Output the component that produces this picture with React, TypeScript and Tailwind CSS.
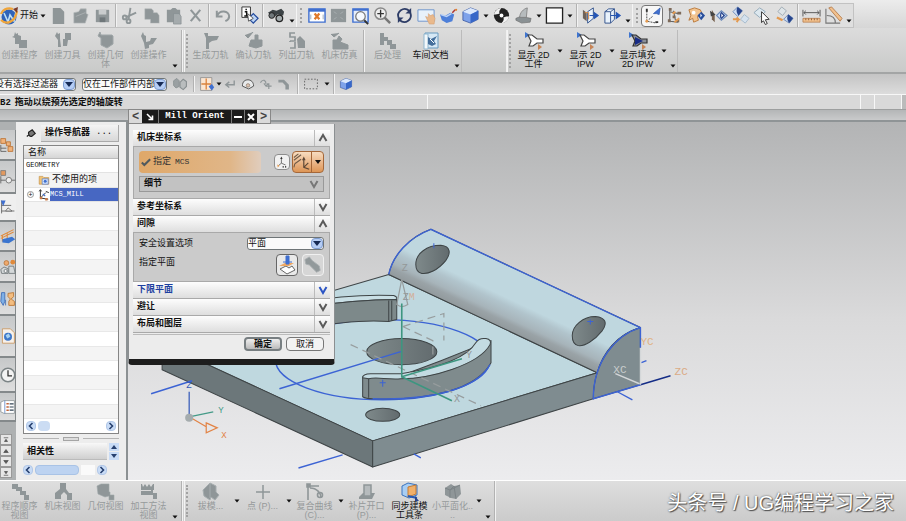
import type { ReactNode } from "react";

const G = "#8f9698";
const B = "#3f6fd0";
const O = "#e39a50";

// all glyphs share a 20x20 box
const glyphs: Record<string, ReactNode> = {
  logo: (
    <>
      <circle cx="9" cy="11" r="7.5" fill="#2f63b8" />
      <path d="M4 7l4 9 2-7 4 6 2-9" fill="none" stroke="#bfe0f5" strokeWidth="1.6" />
      <path d="M1 14c5 5 14 3 16-9M1 8c1-4 6-7 12-5" fill="none" stroke="#f0a53a" strokeWidth="2.2" />
      <path d="M13 3l5-2-1 6z" fill="#7b3b2a" />
    </>
  ),
  doc: <path d="M4 2h8l4 4v13H4z" fill={G} />,
  open: <path d="M3 7l5-1 2-3h6v5l2 1-3 9H3z M5 11l10-4" fill={G} stroke="#b5babb" strokeWidth=".7" />,
  save: (
    <>
      <path d="M3 4h14v13H3z" fill={G} />
      <path d="M6 4h8v5H6z" fill="#c9cccd" />
      <path d="M7 12h6v5H7z" fill="#6f777a" />
    </>
  ),
  cut: (
    <g fill="none" stroke={G} strokeWidth="2">
      <path d="M11 2l-2 12M17 7L6 12" />
      <circle cx="5" cy="12" r="2" />
      <circle cx="9" cy="16" r="2" />
    </g>
  ),
  copy: <path d="M3 3h7l2 2v2h4l2 3v8H9v-4H3z" fill={G} stroke="#aeb3b5" strokeWidth=".5" />,
  paste: (
    <>
      <path d="M3 4h4l2-2h3l2 2h3v13H3z" fill={G} />
      <path d="M10 8h6l2 3v8h-8z" fill="#a5abad" stroke="#858c8f" strokeWidth=".7" />
    </>
  ),
  cross: <path d="M5 4l10 12M15 4L5 16" stroke={G} strokeWidth="2.2" />,
  undo: <path d="M4 5v6h6M4 11c3-8 13-6 13 0 0 3-2 4-4 5" fill="none" stroke={G} strokeWidth="2.1" />,
  info: (
    <>
      <path d="M2 1h9v11H2z" fill="#fff" stroke="#333" />
      <path d="M6.500 3v1.500M5 6h2v4M4.500 10.500h4.500" fill="none" stroke="#111" strokeWidth="1.500" />
      <path d="M9 13l5-5 5 5-5 5z" fill="#bcd4f5" stroke="#234a9c" strokeWidth="1.300" />
      <path d="M8 8l6 5-5 3z" fill="#fff" stroke="#333" strokeWidth=".8" />
    </>
  ),
  find: (
    <>
      <path d="M1 7l5-3 4 1 5-2 3 3-1 4-6-1-4 3z" fill="#3c4346" />
      <circle cx="5" cy="10" r="3" fill="#71797c" stroke="#222" />
      <circle cx="13" cy="13" r="3.500" fill="#a4acae" stroke="#222" strokeWidth="1.300" />
    </>
  ),
  fit: (
    <>
      <path d="M2 3h17v14H2z" fill="#fff" stroke={B} strokeWidth="1.500" />
      <path d="M2 3h17v3H2z" fill={B} />
      <path d="M8 8l5 6M13 8l-5 6" stroke="#e07a2a" strokeWidth="2.400" />
      <path d="M4 9v5M17 9v5" stroke="#9ab" />
    </>
  ),
  fitGrey: (
    <>
      <path d="M2 3h16v14H2z" fill={G} />
      <path d="M5 6l3 2M15 6l-3 2M5 14l3-2M15 14l-3-2" stroke="#a7adaf" />
    </>
  ),
  zoomBox: (
    <>
      <path d="M2 3h16v14H2z" fill="#e6eefb" stroke={B} strokeWidth="1.500" />
      <path d="M2 3h16v2H2z" fill={B} />
      <circle cx="10" cy="11" r="5" fill="#f5f9ff" stroke="#777" strokeWidth="1.300" />
      <path d="M14 15l4 4" stroke="#333" strokeWidth="2" />
    </>
  ),
  zoom: (
    <>
      <circle cx="8" cy="8" r="6" fill="#eee" stroke="#888" strokeWidth="1.600" />
      <path d="M8 4v8M4.500 8h7" stroke="#333" strokeWidth="1.400" />
      <path d="M12 12l6 6" stroke="#777" strokeWidth="2.600" />
    </>
  ),
  rotate: (
    <g fill="none" stroke="#2d3c66" strokeWidth="1.900">
      <path d="M4 13c-3-7 5-13 11-8M16 7c3 7-5 13-11 8" />
      <path d="M17 2v6h-6zM3 18v-6h6z" fill="#2d3c66" stroke="none" />
    </g>
  ),
  pan: (
    <>
      <path d="M1 4h17v12H1z" fill="#e8f1fa" stroke="#6d94cb" />
      <path d="M9 11l3 1V8l2 2 3-1 2 4-1 6h-5z" fill="#e9b98c" stroke="#d39a68" strokeWidth=".5" />
    </>
  ),
  persp: (
    <>
      <path d="M1 9l6 1 5-3 4 2-2 7-6 2-5-3z" fill="#4d7fd9" />
      <path d="M2 9l6 2 5-3" stroke="#bcd2f5" fill="none" strokeWidth="1.500" />
      <path d="M14 7l3-3" stroke="#a33" strokeWidth="1.500" />
      <circle cx="18" cy="4" r="1.200" fill="#e08030" />
    </>
  ),
  cube: (
    <>
      <path d="M2 6l8-4 8 3v9l-8 4-8-3z" fill="#7ea2ea" stroke="#2f4f9c" strokeWidth=".8" />
      <path d="M2 6l8-4 8 3-8 4z" fill="#dbe8fc" />
      <path d="M10 9l8-4v9l-8 4z" fill="#3767c8" />
    </>
  ),
  shade: (
    <>
      <circle cx="10" cy="10" r="8" fill="#222" />
      <path d="M10 2c-2 2-3 4-2 6-2 1-4 1-6 1 1-4 4-7 8-7zM10 18c2-2 3-4 2-6 2-1 4-1 6-1-1 4-4 7-8 7z" fill="#f1f1f1" />
      <circle cx="10" cy="10" r="2" fill="#fff" />
    </>
  ),
  face: (
    <>
      <path d="M2 13l5-2 11 2-1 4-9 1-6-3z" fill="#8a9194" stroke="#666" strokeWidth=".6" />
      <path d="M6 12c0-5 4-9 8-10l-1 10z" fill="#b6bbbd" stroke="#777" strokeWidth=".8" />
    </>
  ),
  white: <path d="M1.500 2h17v16h-17z" fill="#fff" stroke="#222" strokeWidth="1.400" />,
  clip: (
    <>
      <path d="M2 4l4 3v9l-4-3z" fill="#6e625a" />
      <path d="M7 6l6-4v11l-6 5z" fill="#e9f2fb" stroke="#33528c" />
      <path d="M4 7h4v7" stroke="#d98b45" fill="none" />
      <path d="M9 10h7M14 7l4 3-4 3z" stroke="#2456b5" fill="#2456b5" strokeWidth="1.300" />
    </>
  ),
  clip2: (
    <>
      <path d="M2 6l4-3h6v11l-4 4H2z" fill="#e9f2fb" stroke="#33528c" />
      <path d="M2 6h6v12M8 6l4-3" stroke="#33528c" fill="none" />
      <path d="M8 10h7M14 7l4 3-4 3z" stroke="#2456b5" fill="#2456b5" strokeWidth="1.300" />
    </>
  ),
  wcs: (
    <>
      <path d="M4 5v11l10 2M4 16l6-5" stroke="#444" fill="none" strokeDasharray="2 1" />
      <path d="M11 8l7-6-1 7-3-1z" fill={B} stroke="#2c57ae" strokeWidth=".8" />
      <path d="M3 3h2v3H3zM13 16h3v2h-3z" fill="#333" />
      <circle cx="4" cy="16" r="1.500" fill={O} />
    </>
  ),
  nodes: (
    <>
      <path d="M5 3v13l9 1M5 6l9 2M9 5l2 10" stroke="#666" fill="none" strokeWidth="1.200" />
      <path d="M4 2h3v3H4zM13 6h4v3h-4zM3 14h3v3H3zM12 14h3v3h-3zM8 10h3v3H8z" fill="#7d6a5a" />
      <path d="M8 8l3-2M10 17l5-4" stroke={O} strokeWidth="2" />
    </>
  ),
  key: (
    <>
      <path d="M2 4l6-2 6 2 2 4-5 3 1 4-5 2-1-4-4 2 2-5z" fill="#f2c490" stroke="#b6712f" strokeWidth=".9" />
      <circle cx="7" cy="7" r="2" fill="#fff" />
      <path d="M11 10l4-4 4 4-4 5z" fill="#284e9c" />
      <path d="M14 8l2 2-2 2z" fill="#d6e4fa" />
    </>
  ),
  prev: (
    <>
      <path d="M3 4l3 5v8l-3-3z" fill="#76604d" />
      <path d="M1 5l6 4-5 2z" fill="#444" />
      <path d="M8 10l5-5 6 5-6 5z" fill="#c9dcf7" stroke="#6f8bb8" strokeWidth="1.200" />
      <path d="M13 6l4 4-4 4c-2-2-2-6 0-8z" fill="#27458d" />
      <path d="M13 8l2 2-2 2z" fill="#fff" />
    </>
  ),
  swap: (
    <>
      <path d="M2 6l5-5 5 4-5 6z" fill="#cfdff5" stroke="#6f8bb8" />
      <path d="M7 1l5 4-4 5c-2-2-3-6-1-9z" fill="#27458d" />
      <path d="M10 14l4-5 5 4-4 5z" fill="#d5e2ee" stroke="#a7bccd" />
      <path d="M2 14h6l-2-2M8 14l-2 3" stroke={O} strokeWidth="2" fill="none" />
    </>
  ),
  pick: (
    <>
      <path d="M1 7l6-5 6 4-6 6z" fill="#dce7ee" stroke="#92a9b8" />
      <path d="M9 6l8 8-4 .5 2 4-2 1-2-4-2 2z" fill="#fff" stroke="#333" />
    </>
  ),
  swap2: (
    <>
      <path d="M3 6l4-5 5 4-4 5z" fill="#dfe5e8" stroke="#a1adb5" />
      <path d="M9 14l5-5 5 4-4 5z" fill="#cfdff5" stroke="#6f8bb8" />
      <path d="M14 9l5 4-4 5c-2-2-3-6-1-9z" fill="#27458d" />
      <path d="M2 12l6 3" stroke={O} strokeWidth="2.400" />
    </>
  ),
  ruler: (
    <>
      <path d="M1 4v7M19 4v7M2 7h16M4 5L2 7l2 2M16 5l2 2-2 2" stroke="#555" fill="none" />
      <path d="M1 13h18v4H1z" fill="#f1c08d" stroke="#b2794a" strokeWidth=".8" />
      <path d="M4 13v2M7 13v2M10 13v2M13 13v2M16 13v2" stroke="#94623a" />
    </>
  ),
  angle: (
    <>
      <path d="M2 3v15h15M3 10c6 0 9 3 9 8" stroke="#777" fill="none" strokeWidth="1.200" />
      <path d="M5 2l3-1 11 12-2 3z" fill="#f1c08d" stroke="#b2794a" strokeWidth=".9" />
    </>
  ),
  create1: <path d="M5 1l1 2 2-1v2l3 1v4h6v8h-8v-4H5V7L2 6l2-1z" fill={G} />,
  create2: <path d="M4 1l1 2 2-1v6l1 8H5V9L2 5zM12 2h6v7h-3l-1 6h-4V8h2z" fill={G} />,
  create3: <path d="M4 1l1 3h11l1 1v8l-6 4-6-3V7L2 5z" fill={G} stroke="#9fa6a8" />,
  create4: <path d="M4 1l1 3 2 1v6l4-1 1-3h6l-4 6-4 1v3l-4 1-1-6-3-7z" fill={G} />,
  path1: <path d="M3 2h4v3h11l-2 4-5 1-3 2v6H5V7z" fill={G} />,
  verify: <path d="M1 4l3 3 5-6M7 9h4V4h3v5h4v6l-6 2-7-2z" fill={G} stroke={G} />,
  list: (
    <>
      <path d="M8 2H3v4h5v4H3M3 10v1M8 11v6H3" fill="none" stroke={G} strokeWidth="1.700" />
      <path d="M10 8l3-3 5 5v7h-7z" fill={G} />
    </>
  ),
  sim: <path d="M1 3l3 3 5-4M3 9h4l2-4 3 3-2 3 8 3v4H3z" fill={G} stroke={G} />,
  post: <path d="M2 2h4v4h4v4H6v4H2V9zM9 9h5v4h4v5h-6v-4H9z" fill={G} />,
  shop: (
    <>
      <path d="M4 2h13v15H4z" fill="#d6e8f5" stroke="#6699bf" />
      <path d="M3 3h4v15H3z" fill="#f3f8fb" stroke="#90b6cf" />
      <path d="M7 6l3 2 6-3-3 5 2 3-4 2-4-2z" fill="#456f9c" />
      <path d="M9 8l4 4" stroke="#fff" />
    </>
  ),
  show2d: (
    <>
      <path d="M1 1l5 3-5 3z" fill="#3f75cf" />
      <path d="M4 4h4l5 4h6v4h-6l-4 3H5l2-5z" fill="#fff" stroke="#444" strokeWidth="1.200" />
      <path d="M14 13l4 3-4 3z" fill="#c78455" />
    </>
  ),
  show2dFill: (
    <>
      <path d="M1 1l5 3-5 3z" fill="#3f75cf" />
      <path d="M4 4h4l5 4h6v4h-6l-4 3H5l2-5z" fill="#8b8f98" stroke="#333" strokeWidth="1.200" />
      <path d="M7 6l8 4-8 4z" fill="#182c86" />
      <path d="M14 13l4 3-4 3z" fill="#c78455" />
    </>
  ),
  filter: (
    <>
      <path d="M2 6l4-3 3 3v7l-4 2-3-3z" fill="#9aa0a2" stroke="#888f91" />
      <path d="M10 8l4-4 4 3v6l-4 4-4-3z" fill="#b9bdbe" stroke="#888f91" strokeWidth="1.400" />
    </>
  ),
  snap: (
    <>
      <path d="M2 2h14v16H2z" fill="#fbe6d2" stroke="#8c8c8c" />
      <path d="M9 3v14M3 10h12" stroke="#d9823c" strokeWidth="1.600" />
      <path d="M12 13l4-3 3 4-3 4z" fill={B} />
    </>
  ),
  enter: <path d="M16 5v6H5M9 7l-5 4 5 4" fill="none" stroke={G} strokeWidth="2" />,
  dome: (
    <>
      <path d="M2 13C2 6 6 4 10 4s8 3 8 9l-7 4z" fill="#e8eaeb" stroke="#555" strokeWidth="1.400" />
      <circle cx="10" cy="12" r="2.500" fill="#ddc4b4" stroke="#876" />
    </>
  ),
  jump: <path d="M2 8c4-6 8-3 8 2M7 9l3 4 3-4M14 9v8M10 13h8" fill="none" stroke={G} strokeWidth="1.700" />,
  pipe: <path d="M2 4h8l7 7v7h-5v-6L8 8H2z" fill={G} />,
  marquee: <path d="M2 4h16v12H2z" fill="none" stroke="#666" strokeWidth="1.200" strokeDasharray="2 2" />,
  viewProg: <path d="M2 2h6v3h4v4h4v4h3v5h-5v-5h-4V9H6V7H2z" fill={G} />,
  viewMach: <path d="M7 1h6v6l3 4h3v7h-5v-5l-3-3-3 3v4H2v-6l5-4z" fill={G} />,
  viewGeo: <path d="M1 4l4-2h8v8h1v3h4v5h-5v-4l-4 1-7-3z" fill={G} stroke="#a0a7a9" strokeWidth=".6" />,
  viewMethod: <path d="M2 2h1l1 3 2-3 2 3 2-3 2 3 2-3h1v6h-1v3h4v6h-4v-4H2V9h10V8H2z" fill={G} />,
  draft: <path d="M9 1l6 3v6l3 3-4 5-4-3-1 3-6-4-1-6z M9 1v15" fill={G} stroke="#a6adaf" />,
  plus: <path d="M10 3v14M3 10h14" stroke={G} strokeWidth="1.500" />,
  curve: (
    <g fill="none" stroke={G} strokeWidth="1.600">
      <path d="M3 18V3M3 4h11M5 6c7 0 11 5 11 10" />
      <circle cx="15" cy="13" r="2.500" />
      <path d="M2 2h3v3H2z" fill={G} />
    </g>
  ),
  patch: (
    <>
      <path d="M2 15l4-4h12l-3 6H2z" fill={G} />
      <path d="M7 3h7v11H7z" fill="#b6bbbd" stroke={G} strokeWidth="1.500" />
    </>
  ),
  sync: (
    <>
      <path d="M2 4l6-3 9 2v10l-8 3-7-3z" fill="#a8cdf2" stroke="#3b74bf" />
      <path d="M8 5l8-2v9l-8 3z" fill="#f0b06a" stroke="#c57a33" />
      <path d="M8 14l9 2" stroke="#2759b5" strokeWidth="2" />
      <path d="M15 14l4 5h-4z" fill="#27458d" />
    </>
  ),
  facet: (
    <>
      <path d="M2 6l6-4 3 2 6-1 1 9-5 5-5-1-6-3z" fill={G} />
      <path d="M2 6l5 2 4-4M7 8v8M11 4l2 13M7 8l10-5" stroke="#7c8386" fill="none" />
    </>
  ),
  csys: (
    <>
      <path d="M9 3v9l7 3M9 12l-5 4" stroke="#555" strokeWidth="1.300" fill="none" />
      <path d="M7 5l2-4 2 4z" fill="#333" />
      <path d="M2 14l4 2-3 3z" fill={O} />
      <path d="M11 18h2M15 18h2" stroke="#111" strokeWidth="2" />
    </>
  ),
  csys2: (
    <>
      <path d="M1 8l8-6M2 12l7-5M1 5l5-4M2 12l-1 4" stroke="#6f5b48" strokeWidth="1.200" />
      <path d="M12 6v10l6 2M12 16l5-5" stroke="#5b4636" strokeWidth="1.300" fill="none" />
      <path d="M10 8l2-4 2 4z" fill="#5b4636" />
    </>
  ),
  plane: (
    <>
      <path d="M3 14l6-3 3 2 3-2 3 4-8 4z" fill="#fff" stroke="#666" />
      <path d="M2 11l6-3h9l-5 3z" fill="#f0a862" />
      <path d="M9 1h3v8H9zM6 7h9" fill={B} stroke={B} />
    </>
  ),
  torch: <path d="M1 4l5-3 3 4 8 6 1 5-4 2-8-8-4-1z" fill="#92999b" stroke="#a9afb1" />,
  pin: <path d="M3 14l4-3M6 7l6-4 5 6-6 5c-3 1-6-3-5-7z" fill="#777" stroke="#222" strokeWidth="2" />,
  folder: (
    <>
      <path d="M2 4h6l2 2h8v11H2z" fill="#f1c375" stroke="#c08a3c" />
      <path d="M7 8h10v9H7z" fill="#d6e4f8" stroke={B} />
      <circle cx="12" cy="12" r="2.500" fill={B} />
    </>
  ),
  mcs: (
    <>
      <path d="M4 2v13l13 2M4 15l9-9M2 4l2-3 2 3M13 4l5 2" stroke="#222" fill="none" strokeWidth="1.500" />
      <path d="M3 13h4v4H3zM12 15h4v4h-4z" fill="#c97b48" />
      <path d="M8 8l4 4" stroke={B} strokeWidth="2" />
    </>
  ),
  railTree: (
    <>
      <path d="M1 10v8h7M1 14h7" stroke="#555" fill="none" />
      <path d="M1 2h6v6H1zM8 6h5v5H8zM10 12h6v6h-6z" fill="#f0b27a" stroke="#b86f30" />
    </>
  ),
  railPart: (
    <>
      <path d="M1 2h6v6H1z" fill="#e39a60" stroke="#777" />
      <path d="M1 9v9M1 14h6M14 14h5" stroke="#555" />
      <circle cx="11" cy="14" r="3.500" fill="#eee" stroke="#666" />
    </>
  ),
  railOp: (
    <>
      <path d="M2 2v16M2 8h12M2 15h16" stroke="#555" />
      <path d="M1 2h6l-3 7z" fill={B} />
      <path d="M7 15l3-4 5 4z" fill="#eee" stroke="#666" />
    </>
  ),
  railLib: (
    <>
      <path d="M1 10L17 2M1 13L17 5M3 9v8M9 6v8" stroke="#e08a3b" strokeWidth="1.300" />
      <path d="M3 14l12-3 4 3-8 5-8-1z" fill="#3b75cf" />
    </>
  ),
  railRobot: (
    <>
      <circle cx="8" cy="5" r="3" fill="#efa96c" stroke="#b4743c" />
      <circle cx="16" cy="4" r="3" fill="#e08a3b" />
      <path d="M1 13l4-3 5 2v6H2zM11 9h6l2 9h-8z" fill="#d5d9da" stroke="#6a7173" />
      <circle cx="7" cy="15" r="2" fill="#f4f4f4" stroke="#6a7173" />
    </>
  ),
  railTools: (
    <>
      <path d="M2 2h4v11l-2 5-3-5zM7 11v7" fill="#7fb0e6" stroke="#3a68b4" />
      <path d="M10 3l7-1v5l-3 3 4 3v5h-7v-5l2-3-3-3z" fill="#f3bd80" stroke="#b56e2a" />
    </>
  ),
  railWeb: (
    <>
      <path d="M3 1h10l5 5v13H3z" fill="#f7f1ea" stroke="#c59055" />
      <circle cx="10" cy="11" r="5" fill="#3e78c9" />
      <path d="M7 9l4-2 2 4-4 2z" fill="#a8d2f0" />
    </>
  ),
  clock: (
    <>
      <circle cx="10" cy="10" r="8.500" fill="#f3f3f3" stroke="#7c8486" strokeWidth="2" />
      <path d="M10 4v7h5" stroke="#333" fill="none" strokeWidth="1.600" />
    </>
  ),
  railList: (
    <>
      <path d="M1 4l4-2h13v16H5l-4-2z" fill="#fff" stroke="#8a9294" />
      <path d="M6 2v16" stroke="#5c83c4" />
      <path d="M8 6h3M8 10h3M8 14h3" stroke="#c0643a" strokeWidth="2" />
      <path d="M12 6h5M12 10h5M12 14h5" stroke="#345" strokeWidth="1.500" />
    </>
  ),
};

function Glyph({ name, className = "size-5" }: { name: string; className?: string }) {
  return (
    <svg viewBox="0 0 20 20" className={`shrink-0 ${className}`} aria-hidden="true">
      {glyphs[name]}
    </svg>
  );
}

function Caret({ className = "items-center" }: { className?: string }) {
  return (
    <span className={`flex w-[9px] shrink-0 justify-center ${className}`}>
      <svg viewBox="0 0 6 4" className="h-1 w-1.5" aria-hidden="true">
        <path d="M0.500 0.500h5l-2.500 3z" fill="#111" />
      </svg>
    </span>
  );
}

const Sep = () => (
  <span className="flex w-[5px] shrink-0 justify-center self-stretch">
    <span className="w-0.5 border-l border-[#b2b2b2] bg-[#f2f2f2]" />
  </span>
);

const Grip = ({ className = "w-[5px]" }: { className?: string }) => (
  <span className={`flex shrink-0 justify-center self-stretch border-l border-[#f4f4f4] py-1 ${className}`}>
    <span className="border-l-2 border-dotted border-[#a2a2a2]" />
  </span>
);

function ToolIcon({ name, active }: { name: string; active?: boolean }) {
  return (
    <button
      aria-label={name}
      className={`flex h-[22px] w-[22px] shrink-0 items-center justify-center ${active ? "rounded-sm border border-[#777] bg-[#f7f7f7]" : ""}`}
    >
      <Glyph name={name} className="size-[19px]" />
    </button>
  );
}

// "|" separator, ":" grip, "v" low caret, ">" centred caret, anything else is a glyph name
function Strip({ items, active }: { items: string[]; active?: string }) {
  return items.map((item, i) => {
    if (item === "|") return <Sep key={i} />;
    if (item === ":") return <Grip key={i} className="w-[9px]" />;
    if (item === "v") return <Caret key={i} className="items-end self-stretch pb-1" />;
    if (item === ">") return <Caret key={i} />;
    return <ToolIcon key={i} name={item} active={item === active} />;
  });
}

type BigProps = { icon: string; lines: string[]; on?: boolean };

function Big({ icon, lines, on }: BigProps) {
  return (
    <button
      className={`flex w-[43px] shrink-0 flex-col items-center pt-px text-[9px] leading-[9px] whitespace-nowrap ${on ? "text-[#111]" : "text-[#969a9b]"}`}
    >
      <Glyph name={icon} />
      {lines.map((line) => (
        <span key={line}>{line}</span>
      ))}
    </button>
  );
}

function Chevron({ up, color = "#555" }: { up?: boolean; color?: string }) {
  return (
    <svg viewBox="0 0 10 10" className="size-2.5" aria-hidden="true">
      <path d={up ? "M1.500 8L5 2l3.500 6" : "M1.500 2L5 8l3.500-6"} fill="none" stroke={color} strokeWidth="2" />
    </svg>
  );
}

function Combo({ label, value, className = "" }: { label: string; value: string; className?: string }) {
  return (
    <span className={`relative flex h-[13px] shrink-0 ${className}`}>
      <select
        aria-label={label}
        className="w-full appearance-none rounded-[3px] border border-[#6f7577] bg-[#fafafa] text-[9px] leading-[11px] text-[#111]"
      >
        <option>{value}</option>
      </select>
      <span className="pointer-events-none absolute inset-y-px right-px flex w-3 items-center justify-center rounded-sm border border-[#7f9dd0] bg-[#b5cdf5]">
        <svg viewBox="0 0 8 5" className="h-[5px] w-2" aria-hidden="true">
          <path d="M0 0h8L4 5z" fill="#162a55" />
        </svg>
      </span>
    </span>
  );
}

function ScrollButton({ left, label }: { left?: boolean; label: string }) {
  return (
    <button
      aria-label={label}
      className="flex size-2.5 shrink-0 items-center justify-center rounded-sm border border-[#b2c8e8] bg-[#c9dcf6]"
    >
      <svg viewBox="0 0 8 8" className="size-2" aria-hidden="true">
        <path d={left ? "M5.500 1L2.500 4l3 3" : "M2.500 1l3 3-3 3"} fill="none" stroke="#27406f" strokeWidth="1.600" />
      </svg>
    </button>
  );
}

function Toolbars() {
  return (
    <header className="shrink-0">
      <div className="flex h-[28px] items-center bg-linear-to-b from-[#ececec] to-[#d6d6d6] pt-[3px]">
        <div className="flex items-center self-stretch border-y border-r border-[#c2c2c2] bg-[#dfdfdf]">
          <button className="flex items-center text-[9px] text-[#111]">
            <Glyph name="logo" />
            开始
            <Caret />
          </button>
          <Strip
            active="wcs"
            items={[
              "doc", "open", "save", "|", "cut", "copy", "paste", "cross", "|", "undo", "|", "info", "|", "find", "v",
              ":", "fit", "fitGrey", "zoomBox", "zoom", "rotate", "pan", "persp", "cube", ">", "shade", "face", ">",
              "white", ">", "|", "clip", "clip2", "v", ":", "wcs", "nodes", "key", "prev", "swap", "pick", "swap2",
              "|", "ruler", "angle", "v",
            ]}
          />
        </div>
      </div>
      <div className="flex h-[46px] border-b-2 border-[#a3a5a5] bg-linear-to-b from-[#dcdcdc] to-[#c9cac9] pt-0.5">
        <div className="-ml-0.5 flex">
          <Big icon="create1" lines={["创建程序"]} />
          <Big icon="create2" lines={["创建刀具"]} />
          <Big icon="create3" lines={["创建几何", "体"]} />
          <Big icon="create4" lines={["创建操作"]} />
        </div>
        <Caret className="items-end pb-1" />
        <Sep />
        <Grip />
        <Big icon="path1" lines={["生成刀轨"]} />
        <Big icon="verify" lines={["确认刀轨"]} />
        <Big icon="list" lines={["列出刀轨"]} />
        <Big icon="sim" lines={["机床仿真"]} />
        <Sep />
        <Big icon="post" lines={["后处理"]} />
        <Big icon="shop" lines={["车间文档"]} on />
        <Caret className="items-end pb-1" />
        <span className="w-[46px] border-x border-l-[#bbb] border-r-[#f0f0f0]" />
        <Grip />
        <Big icon="show2d" lines={["显示 2D", "工件"]} on />
        <Caret />
        <Big icon="show2d" lines={["显示 2D", "IPW"]} on />
        <Caret />
        <Big icon="show2dFill" lines={["显示填充", "2D IPW"]} on />
        <Caret />
        <Caret className="items-end pb-1" />
        <span className="border-l border-[#bbb]" />
      </div>
      <div className="flex h-5 items-center bg-linear-to-b from-[#c4c4c4] to-[#dcdcdc]">
        <Combo label="类型过滤器" value="没有选择过滤器" className="-ml-1.5 w-[82px]" />
        <Combo label="选择范围" value="仅在工作部件内部" className="ml-1.5 w-[85px]" />
        <span className="flex items-center pl-0.5">
          <span className="flex w-[22px] justify-center">
            <Glyph name="filter" className="size-4" />
          </span>
          <Sep />
        </span>
        <span className="flex w-[22px] justify-center">
          <Glyph name="snap" className="size-4" />
        </span>
        <span className="-ml-1 flex -space-x-1">
          <Caret />
          {["enter", "dome", "jump", "pipe"].map((name) => (
            <span key={name} className="flex h-4 w-[22px] items-center justify-center">
              <Glyph name={name} className="size-3.5" />
            </span>
          ))}
        </span>
        <Sep />
        <span className="flex w-[22px] justify-center">
          <Glyph name="marquee" className="size-4" />
        </span>
        <Caret />
        <Sep />
        <span className="flex w-5 justify-center">
          <Glyph name="cube" className="size-3.5" />
        </span>
      </div>
      <div className="flex h-4 border-t border-b border-t-[#f7f7f7] border-b-[#9d9f9f] bg-[#d9d9d9] text-[9px] leading-[14px] font-bold text-[#111]">
        <p className="w-[427px] whitespace-nowrap">
          <span className="mr-1 font-mono text-[9px]">B2</span>拖动以绕预先选定的轴旋转
        </p>
        <span className="flex-1 border-l border-[#f7f7f7]" />
        <span className="w-3.5 border-l border-[#f7f7f7]" />
        <span className="w-[27px] border-l border-[#f7f7f7]" />
        <span className="w-[5px] border-l border-[#f7f7f7] bg-[#bbb]" />
      </div>
    </header>
  );
}

const tabs = [
  { icon: "railTree", label: "装配导航器", size: "h-[31px]" },
  { icon: "railPart", label: "部件导航器", size: "h-[33px]" },
  { icon: "railOp", label: "操作导航器", size: "h-[28px]" },
  { icon: "railLib", label: "重用库", size: "h-[30px]" },
  { icon: "railRobot", label: "加工特征", size: "h-[31px]" },
  { icon: "railTools", label: "加工向导", size: "h-[33px]" },
  { icon: "railWeb", label: "浏览器", size: "h-[42px]" },
  { icon: "clock", label: "历史记录", size: "h-[35px]" },
  { icon: "railList", label: "角色", size: "h-[29px]" },
];

const arrows = ["M1 1h6M4 3L2 6h4z", "M4 2L1 6h6z", "M4 6L1 2h6z", "M1 7h6M4 5L2 2h4z"];

function Rail() {
  return (
    <aside className="flex w-4 shrink-0 flex-col bg-[#aeb1b2] pt-2">
      {tabs.map(({ icon, label, size }) => (
        <button
          key={icon}
          aria-label={label}
          className={`flex shrink-0 items-center justify-center border-b-2 border-[#84898b] ${size} ${icon === "railOp" ? "bg-[#efefef]" : "border-r bg-linear-to-b from-[#c6c8c9] to-[#dedede]"}`}
        >
          <Glyph name={icon} className="size-4" />
        </button>
      ))}
      <div className="flex flex-1 flex-col justify-end pb-0.5">
        {arrows.map((d) => (
          <button
            key={d}
            aria-label="滚动"
            className="flex h-[11px] w-3 items-center justify-center border border-[#999] bg-[#e6e6e6]"
          >
            <svg viewBox="0 0 8 8" className="size-1.5" aria-hidden="true">
              <path d={d} fill="#555" stroke="#555" />
            </svg>
          </button>
        ))}
      </div>
    </aside>
  );
}

function Navigator() {
  return (
    <section className="flex w-28 shrink-0 flex-col border-r-2 border-[#8c9193] bg-[#ededed] px-[7px] text-[9px] text-[#111]">
      <div className="flex h-[23px] shrink-0 items-center gap-1">
        <Glyph name="pin" className="ml-0.5 size-3" />
        <h2 className="flex h-[17px] flex-1 items-center gap-1.5 border-r border-b border-[#aaa] bg-linear-to-b from-[#f4f4f4] to-[#d8d8d8] pl-1 font-bold">
          操作导航器 <span className="font-mono font-normal">...</span>
        </h2>
      </div>
      <div className="flex flex-1 flex-col border border-[#858585] bg-white">
        <h3 className="h-[13px] shrink-0 border-b border-[#bbb] bg-linear-to-b from-[#f4f4f4] to-[#d6d6d6] pl-1 leading-3">名称</h3>
        <ul className="flex flex-1 flex-col">
          <li className="flex flex-1 items-center border-b border-[#e3e3e3] pl-0.5 font-mono text-[7px]">GEOMETRY</li>
          <li className="flex flex-1 items-center gap-0.5 border-b border-[#e3e3e3] bg-[#f4f4f4] pl-3.5">
            <Glyph name="folder" className="size-3" />
            不使用的项
          </li>
          <li className="flex flex-1 items-center border-b border-[#e3e3e3] pl-[3px]">
            <button aria-label="展开" className="mr-1 flex size-[7px] items-center justify-center rounded-sm border border-[#999] text-[7px] leading-none">
              +
            </button>
            <Glyph name="mcs" className="size-3" />
            <span className="flex flex-1 items-center self-stretch bg-[#4767c2] font-mono text-[7px] text-white">MCS_MILL</span>
          </li>
          {Array.from({ length: 15 }, (_, i) => (
            <li key={i} className={`flex-1 border-b border-[#e8e8e8] ${i % 2 ? "bg-white" : "bg-[#f4f4f4]"}`} />
          ))}
        </ul>
        <div className="flex h-[14px] shrink-0 items-center gap-0.5 px-0.5">
          <ScrollButton left label="向左" />
          <span className="h-2.5 w-3 rounded-sm bg-[#cbdcf3]" />
          <span className="flex-1" />
          <ScrollButton label="向右" />
        </div>
      </div>
      <div className="flex h-[9px] shrink-0 items-center gap-1">
        <span className="h-px flex-1 bg-[#b5b5b5]" />
        <span className="h-1 w-4 border border-[#a5a5a5] bg-[#ddd]" />
        <span className="h-px flex-1 bg-[#b5b5b5]" />
      </div>
      <div className="flex h-[37px] shrink-0 flex-col">
        <div className="flex gap-0.5">
          <h3 className="h-[17px] flex-1 border-b border-[#bbb] bg-linear-to-b from-[#f8f8f8] to-[#cfcfcf] pl-1 leading-4 font-bold">相关性</h3>
          <span className="flex w-2.5 flex-col justify-between">
            {[true, false].map((up) => (
              <button key={String(up)} aria-label={up ? "向上" : "向下"} className="flex h-2 items-center justify-center bg-[#c9dcf6]">
                <svg viewBox="0 0 6 4" className="h-1 w-1.5" aria-hidden="true">
                  <path d={up ? "M0 4l3-4 3 4z" : "M0 0l3 4 3-4z"} fill="#27406f" />
                </svg>
              </button>
            ))}
          </span>
        </div>
        <div className="flex flex-1 items-center gap-0.5 pr-3">
          <ScrollButton left label="向左" />
          <span className="h-2.5 w-11 rounded-sm border border-[#a9c3e6] bg-[#bdd3f1]" />
          <span className="h-2.5 flex-1 bg-[#fafafa]" />
          <ScrollButton label="向右" />
        </div>
      </div>
    </section>
  );
}

function Model() {
  return (
    <svg viewBox="128 122 778 357" preserveAspectRatio="xMinYMin slice" className="size-full" role="img" aria-label="零件模型">
      <defs>
        <linearGradient id="round" gradientUnits="userSpaceOnUse" x1="430" y1="229" x2="405" y2="282">
          <stop offset="0.500" stopColor="#bfd7df" />
          <stop offset="0.620" stopColor="#b1c4cc" />
          <stop offset="0.800" stopColor="#a7b4ba" />
          <stop offset="0.880" stopColor="#9aa3a7" />
          <stop offset="1" stopColor="#91999c" />
        </linearGradient>
        <linearGradient id="bore" x1="0" x2="1">
          <stop offset="0" stopColor="#7f8a8b" />
          <stop offset="1" stopColor="#626b6e" />
        </linearGradient>
      </defs>
      <g stroke="#3e4446" strokeWidth="1" strokeLinejoin="round">
        <path d="M162 340L388 274L596 372L372 440L210 365L162 343z" fill="#bfd8df" />
        <path d="M162 343L372 440V466L162 369z" fill="#6c777a" />
        <path d="M372 440L596 372L592 398L372 466z" fill="#7f8c90" />
        <path d="M388 274C392 255 408 237 430 229L639 327C615 334 601 353 596 372z" fill="url(#round)" />
        <path d="M592 398C592 360 615 334 639 327V384z" fill="#7f8c90" />
        <ellipse cx="401" cy="351" rx="35" ry="13" fill="url(#bore)" />
        <ellipse cx="382" cy="414" rx="17" ry="6.500" fill="url(#bore)" />
        <path d="M415 264C415 253 426 245 440 245C450 246 450 253 445 260C437 270 427 274 421 273C417 272 415 269 415 264z" fill="url(#bore)" />
        <path d="M571 335C571 325 582 316 594 316C605 317 606 323 601 330C593 340 583 346 577 345C572 344 571 340 571 335z" fill="url(#bore)" />
      </g>
      <ellipse cx="382" cy="359" rx="107" ry="40" fill="none" stroke="#3c63d4" strokeWidth="1.300" />
      <g stroke="#3e4446" strokeWidth="1" strokeLinejoin="round">
        <path d="M300 302C340 295 370 294 393 295Q398 297 395 299C370 299 335 302 300 307z" fill="#c9dfe5" />
        <path d="M300 307C335 302 370 299 396 299V319L388 321C365 319 335 322 300 328z" fill="#7d898a" />
        <path d="M388 300V321M391 300V320" />
        <path d="M362 376V396Q365 398 372 398C430 400 476 388 490 362V340L440 360L400 375z" fill="#7f8b8d" />
        <path d="M362 377Q362 373 370 373H400C440 367 466 357 475 342Q478 337 485 338Q491 339 489 344C478 364 430 378 400 378C386 379 376 376 368 378z" fill="#c3dbe2" />
        <path d="M368 378V397" />
      </g>
      <g fill="none" stroke="#3c63d4" strokeWidth="1.400">
        <path d="M388 274C392 255 408 237 430 229L639 327V347M639 327C615 334 592 360 592 398L639 384" />
        <path d="M372 398C430 400 476 388 489 364M279 388L400 351M151 393L192 380M298 467L342 454M413 453L420 457M616 391L631 399M640 362L645 360" />
        <path d="M382 379v7M379 382h6M433 243v5M589 319v5M586 321h6" strokeWidth="1" />
        <path d="M639 384L669 375" stroke="#142c86" />
        <path d="M639 347V384M614 373L638 383" stroke="#d4d7d9" />
      </g>
      <g fill="none" stroke="#979d9e" strokeWidth="1.200">
        <path d="M350 344L480 405M402 326L443 313V340M402 326L432 340V358" strokeDasharray="8 5" />
        <path d="M401 279L396 304Q401 308 407 304L401 279" />
      </g>
      <path d="M401 303V376L461 358M401 376L451 400" fill="none" stroke="#3d9680" strokeWidth="1.600" />
      <g className="font-mono text-[10px]" fill="#939798">
        <text x="401" y="271">Z</text>
        <text x="402" y="300">Z<tspan fill="#d3b09b">M</tspan></text>
        <text x="465" y="357">Y</text>
        <text x="453" y="401">X</text>
        <text x="612" y="372" className="text-[11px]" fill="#c8cccd">XC</text>
        <text x="639" y="344" className="text-[11px]" fill="#e0b183">YC</text>
        <text x="673" y="374" className="text-[11px]" fill="#dbab85">ZC</text>
      </g>
      <g fill="none" strokeWidth="1.200">
        <path d="M189 416V391" stroke="#3157b8" />
        <path d="M189 416L213 411" stroke="#439a87" />
        <path d="M189 416L206 426M206 422L217 427L206 432z" stroke="#e28345" />
        <circle cx="189" cy="417" r="4" fill="#a5acae" stroke="none" />
      </g>
      <g className="font-mono text-[9px]">
        <text x="186" y="387" fill="#3157b8">Z</text>
        <text x="218" y="412" fill="#439a87">Y</text>
        <text x="221" y="437" fill="#e28345">X</text>
      </g>
    </svg>
  );
}

function SectionHead({ title, up, blue }: { title: string; up?: boolean; blue?: boolean }) {
  return (
    <h3
      className={`flex h-[17px] items-center border-b border-[#a9a9a9] bg-linear-to-b from-[#fdfdfd] to-[#dedede] pl-1 font-bold ${blue ? "text-[#1c3fa0]" : ""}`}
    >
      <span className="flex-1">{title}</span>
      <button aria-label={title} className="flex h-4 w-4 items-center justify-center border-l border-[#bbb]">
        <Chevron up={up} color={blue ? "#2c55c4" : "#5a5a5a"} />
      </button>
    </h3>
  );
}

function Dialog() {
  return (
    <div role="dialog" aria-label="Mill Orient" className="absolute -top-[13px] left-0 w-[207px] text-[9px] text-[#111]">
      <div className="flex h-[15px] w-[143px] items-stretch border border-[#888] bg-[#1b1b1b] text-white">
        <button aria-label="上一个" className="w-[13px] bg-[#dadada] font-mono text-[12px] leading-3 font-bold text-[#444]">&lt;</button>
        <span className="flex w-[17px] items-center justify-center border-r border-[#777]">
          <svg viewBox="0 0 8 8" className="size-2" aria-hidden="true">
            <path d="M1 1l5 5M6.500 2.500v4h-4" fill="none" stroke="#fff" strokeWidth="1.600" />
          </svg>
        </span>
        <h2 className="flex-1 text-center font-mono text-[9px] leading-[13px] font-bold whitespace-nowrap">Mill Orient</h2>
        <button aria-label="最小化" className="flex w-[13px] items-center justify-center border-l border-[#777]">
          <span className="h-0.5 w-2 bg-white" />
        </button>
        <button aria-label="关闭" className="flex w-[13px] items-center justify-center border-l border-[#777]">
          <svg viewBox="0 0 8 8" className="size-2" aria-hidden="true">
            <path d="M1 1l6 6M7 1L1 7" stroke="#fff" strokeWidth="2" />
          </svg>
        </button>
        <button aria-label="下一个" className="w-[13px] bg-[#dadada] font-mono text-[12px] leading-3 font-bold text-[#444]">&gt;</button>
      </div>
      <div className="rounded-b border-x border-b-[6px] border-x-[#8b8f91] border-b-[#1d1d1d] bg-[#ececec] px-1 pt-1.5">
        <SectionHead title="机床坐标系" up />
        <div className="flex flex-col gap-[3px] border border-t-0 border-[#a9a9a9] bg-[#cbcbcb] px-[5px] pt-1 pb-1.5">
          <div className="flex h-[22px] items-center">
            <span className="flex h-full w-[122px] items-center gap-0.5 rounded-sm bg-linear-to-r from-[#dfa869] via-[#e0b688] via-75% to-[#e0cdbd] text-[#333]">
              <svg viewBox="0 0 12 10" className="ml-0.5 h-[9px] w-2.5" aria-hidden="true">
                <path d="M1 5l3 3 7-7" fill="none" stroke="#505a5e" strokeWidth="2.500" />
              </svg>
              指定 <span className="pl-0.5 font-mono text-[8px]">MCS</span>
            </span>
            <button aria-label="坐标系对话框" className="ml-auto flex size-4 items-center justify-center rounded-sm border border-[#8d8d8d] bg-[#f1f1f1]">
              <Glyph name="csys" className="size-3" />
            </button>
            <button aria-label="坐标系类型" className="ml-0.5 flex h-[22px] w-8 items-center rounded-sm border border-[#a5683a] bg-linear-to-b from-[#f7dcc0] to-[#dd9555]">
              <Glyph name="csys2" className="size-[18px]" />
              <span className="flex h-full flex-1 items-center justify-center border-l border-[#a5683a]">
                <svg viewBox="0 0 6 4" className="h-1 w-1.5" aria-hidden="true">
                  <path d="M0 0h6L3 4z" fill="#111" />
                </svg>
              </span>
            </button>
          </div>
          <button className="flex h-4 items-center justify-between border border-[#999] bg-[#c2c2c2] px-1 font-bold">
            细节
            <Chevron color="#777" />
          </button>
        </div>
        <SectionHead title="参考坐标系" />
        <SectionHead title="间隙" up />
        <div className="flex flex-col gap-[3px] border border-t-0 border-[#a9a9a9] bg-[#cbcbcb] px-[5px] pt-1 pb-[5px]">
          <div className="flex items-center justify-between">
            安全设置选项
            <Combo label="安全设置选项" value="平面" className="w-[77px]" />
          </div>
          <div className="flex items-center gap-1">
            <span className="flex-1 pb-1">指定平面</span>
            <button aria-label="平面构造器" className="flex size-[22px] items-center justify-center rounded-sm border border-[#666] bg-[#e9e9e9]">
              <Glyph name="plane" />
            </button>
            <button aria-label="显示" className="flex size-[22px] items-center justify-center rounded-sm border border-[#f0f0f0] bg-[#d6d6d6]">
              <Glyph name="torch" className="size-[18px]" />
            </button>
          </div>
        </div>
        <SectionHead title="下限平面" blue />
        <SectionHead title="避让" />
        <SectionHead title="布局和图层" />
        <div className="mt-px flex justify-end gap-1 border-t border-[#bbb] pt-0.5 pr-1.5 pb-2">
          <button className="h-[14px] w-[38px] rounded-sm border-2 border-[#777e81] bg-linear-to-b from-[#efefef] to-[#bbb] leading-[10px] font-bold">确定</button>
          <button className="h-[14px] w-[38px] rounded-sm border border-[#777] bg-[#f3f3f3] leading-3">取消</button>
        </div>
      </div>
    </div>
  );
}

function BottomBar() {
  return (
    <footer className="flex h-[41px] shrink-0 border-t border-white bg-linear-to-b from-[#dedede] to-[#cbcbcb]">
      <div className="-ml-0.5 flex">
        <Big icon="viewProg" lines={["程序顺序", "视图"]} />
        <Big icon="viewMach" lines={["机床视图"]} />
        <Big icon="viewGeo" lines={["几何视图"]} />
        <Big icon="viewMethod" lines={["加工方法", "视图"]} />
      </div>
      <Caret className="items-end pb-0.5" />
      <Sep />
      <Grip />
      <Big icon="draft" lines={["拔模..."]} />
      <Caret />
      <Big icon="plus" lines={["点 (P)..."]} />
      <Caret />
      <Big icon="curve" lines={["复合曲线", "(C)..."]} />
      <Caret />
      <Big icon="patch" lines={["补片开口", "(P)..."]} />
      <Big icon="sync" lines={["同步建模", "工具条"]} on />
      <Big icon="facet" lines={["小平面化..", ".."]} />
      <Caret />
      <Caret className="items-end pb-0.5" />
      <Sep />
      <p className="ml-auto self-center pt-1 pr-3 text-[20px] leading-6 whitespace-nowrap text-white [text-shadow:0_0_2px_#444,1px_1px_1px_#555]">
        头条号 / UG编程学习之家
      </p>
    </footer>
  );
}

export default function App() {
  return (
    <div className="flex h-screen flex-col overflow-hidden bg-[#d9d9d9] font-['Liberation_Sans','Noto_Sans_CJK_SC',sans-serif] [&_.font-mono]:font-['Liberation_Mono','Noto_Sans_CJK_SC',monospace]">
      <Toolbars />
      <div className="h-3 shrink-0 border-b-2 border-[#8f9496] bg-linear-to-b from-[#b4b6b7] to-[#c9cacb]" />
      <main className="flex min-h-0 flex-1">
        <Rail />
        <Navigator />
        <div className="relative min-w-0 flex-1 bg-linear-to-b from-[#b3b4b5] via-[#dadadb] via-55% to-[#ececee]">
          <Model />
          <Dialog />
        </div>
      </main>
      <BottomBar />
    </div>
  );
}
